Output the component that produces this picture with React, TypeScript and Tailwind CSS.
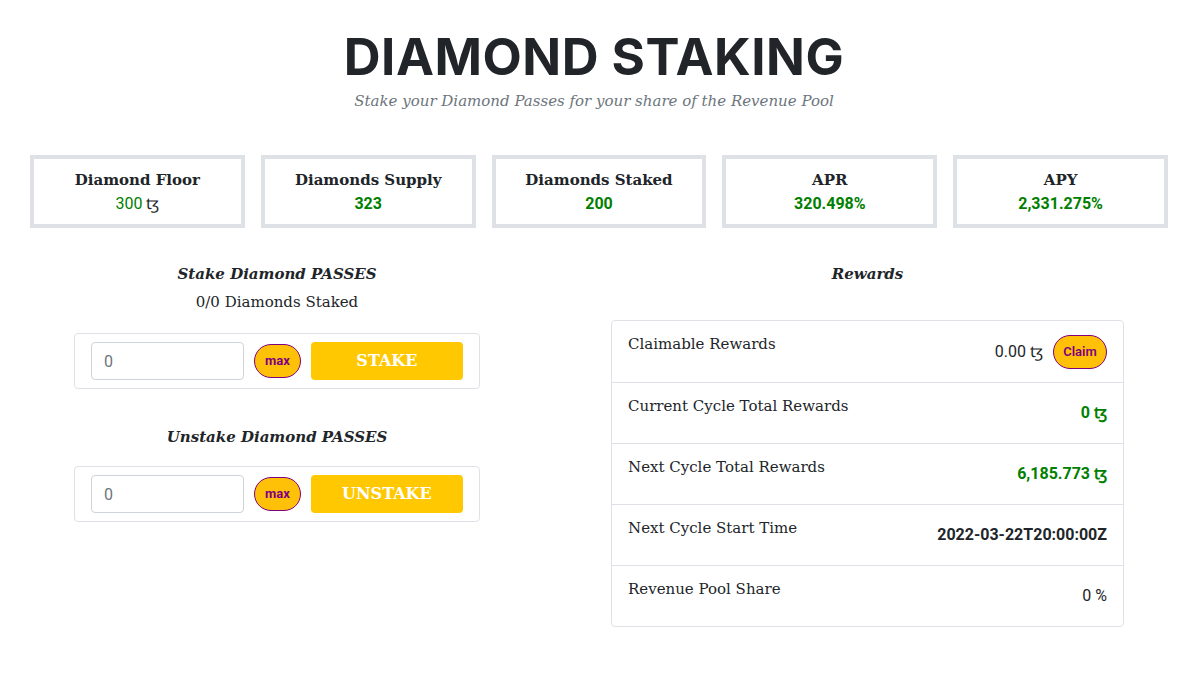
import type { ReactNode } from "react";

const SLAB = "font-['DejaVu_Serif',serif]";
const SANS = "font-['Roboto',sans-serif]";

type Stat = { label: string; value: ReactNode };

const STATS: Stat[] = [
  {
    label: "Diamond Floor",
    value: (
      <>
        <span className="text-[#008000]">300</span> <span className="text-[#212529]">ꜩ</span>
      </>
    ),
  },
  { label: "Diamonds Supply", value: <span className="font-bold text-[#008000]">323</span> },
  { label: "Diamonds Staked", value: <span className="font-bold text-[#008000]">200</span> },
  { label: "APR", value: <span className="font-bold text-[#008000]">320.498%</span> },
  { label: "APY", value: <span className="font-bold text-[#008000]">2,331.275%</span> },
];

function StakeBox({ action }: { action: string }) {
  return (
    <div className="flex h-[56px] items-center gap-[10px] rounded border border-[#dee2e6] px-4">
      <input
        placeholder="0"
        className={`${SANS} h-[38px] w-[153px] rounded border border-[#ced4da] px-3 text-base text-[#212529] placeholder:text-[#6c757d] focus:outline-none`}
      />
      <button
        type="button"
        className={`${SANS} h-[34px] w-[47px] rounded-full border border-[#800080] bg-[#ffc107] text-[13px] font-bold text-[#800080]`}
      >
        max
      </button>
      <button
        type="button"
        className={`${SLAB} h-[38px] w-[153px] rounded bg-[#ffc800] text-base font-bold text-white`}
      >
        {action}
      </button>
    </div>
  );
}

type Reward = { label: string; value: ReactNode };

const REWARDS: Reward[] = [
  {
    label: "Claimable Rewards",
    value: (
      <div className="flex items-center gap-[10px]">
        <span className={`${SANS} text-base text-[#212529]`}>0.00 ꜩ</span>
        <button
          type="button"
          className={`${SANS} h-[34px] w-[54px] rounded-full border border-[#800080] bg-[#ffc107] text-[13px] font-semibold text-[#800080]`}
        >
          Claim
        </button>
      </div>
    ),
  },
  {
    label: "Current Cycle Total Rewards",
    value: <span className={`${SANS} text-base font-bold text-[#008000]`}>0 ꜩ</span>,
  },
  {
    label: "Next Cycle Total Rewards",
    value: <span className={`${SANS} text-base font-bold text-[#008000]`}>6,185.773 ꜩ</span>,
  },
  {
    label: "Next Cycle Start Time",
    value: <span className={`${SANS} text-base font-bold text-[#212529]`}>2022-03-22T20:00:00Z</span>,
  },
  {
    label: "Revenue Pool Share",
    value: <span className={`${SANS} text-base text-[#212529]`}>0 %</span>,
  },
];

export default function App() {
  return (
    <div className="min-h-[674px] bg-white text-[#212529]">
      <header className="pt-[27px] text-center">
        <h1 className="font-['Inter',sans-serif] text-[51px] font-bold leading-[60px] tracking-[0.5px] text-[#212529]">
          DIAMOND STAKING
        </h1>
        <p className={`${SLAB} mt-[2px] text-[15px] italic leading-6 text-[#6c757d]`}>
          Stake your Diamond Passes for your share of the Revenue Pool
        </p>
      </header>

      <div className="mt-[42px] flex gap-4 pl-[30px] pr-[20px]">
        {STATS.map((stat) => (
          <div
            key={stat.label}
            className="flex h-[73px] flex-1 flex-col items-center justify-center border-4 border-[#dee2e6] bg-white"
          >
            <div className={`${SLAB} text-[15px] font-bold leading-6`}>{stat.label}</div>
            <div className={`${SANS} text-base leading-6`}>{stat.value}</div>
          </div>
        ))}
      </div>

      <div className="mt-[34px] flex gap-[131px] pl-[74px]">
        <section className="w-[406px]">
          <h2 className={`${SLAB} text-center text-[15px] font-bold italic leading-6`}>
            Stake Diamond PASSES
          </h2>
          <p className={`${SLAB} mt-[4px] text-center text-[15px] leading-6`}>0/0 Diamonds Staked</p>
          <div className="mt-[19px]">
            <StakeBox action="STAKE" />
          </div>

          <h2 className={`${SLAB} mt-[36px] text-center text-[15px] font-bold italic leading-6`}>
            Unstake Diamond PASSES
          </h2>
          <div className="mt-[17px]">
            <StakeBox action="UNSTAKE" />
          </div>
        </section>

        <section className="w-[513px]">
          <h2 className={`${SLAB} text-center text-[15px] font-bold italic leading-6`}>Rewards</h2>
          <div className="mt-[34px] rounded border border-[#dee2e6]">
            {REWARDS.map((row, i) => (
              <div
                key={row.label}
                className={`flex h-[61px] items-center justify-between px-4 ${
                  i > 0 ? "border-t border-[#dee2e6]" : ""
                }`}
              >
                <span className={`${SLAB} self-start pt-[11px] text-[15px] leading-6`}>{row.label}</span>
                {row.value}
              </div>
            ))}
          </div>
        </section>
      </div>
    </div>
  );
}
